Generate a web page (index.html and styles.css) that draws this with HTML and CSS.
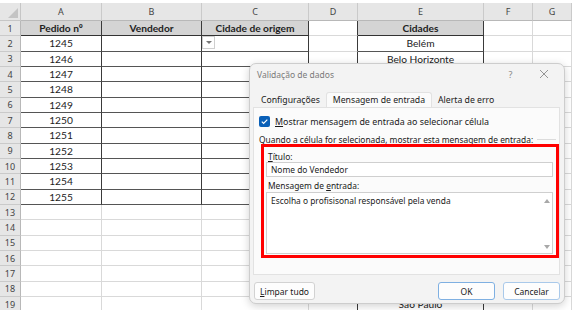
FILE: index.html
```html
<!DOCTYPE html>
<html lang="pt">
<head>
<meta charset="utf-8">
<title>Validação de dados</title>
<link rel="stylesheet" href="styles.css">
</head>
<body>
<div class="sheet">
  <div class="corner"><span class="tri"></span></div>
  <div class="ch">A</div><div class="ch">B</div><div class="ch">C</div><div class="ch">D</div><div class="ch">E</div><div class="ch">F</div><div class="ch">G</div>

  <div class="rh">1</div><div class="c t hd">Pedido nº</div><div class="c t hd">Vendedor</div><div class="c t hd">Cidade de origem</div><div class="c dl"></div><div class="c t hd">Cidades</div><div class="c"></div><div class="c"></div>
  <div class="rh">2</div><div class="c t">1245</div><div class="c t"></div><div class="c t"><span class="dd"><span class="ddtri"></span></span></div><div class="c dl"></div><div class="c t">Belém</div><div class="c"></div><div class="c"></div>
  <div class="rh">3</div><div class="c t">1246</div><div class="c t"></div><div class="c t"></div><div class="c dl"></div><div class="c t">Belo Horizonte</div><div class="c"></div><div class="c"></div>
  <div class="rh">4</div><div class="c t">1247</div><div class="c t"></div><div class="c t"></div><div class="c dl"></div><div class="c t"></div><div class="c"></div><div class="c"></div>
  <div class="rh">5</div><div class="c t">1248</div><div class="c t"></div><div class="c t"></div><div class="c dl"></div><div class="c t"></div><div class="c"></div><div class="c"></div>
  <div class="rh">6</div><div class="c t">1249</div><div class="c t"></div><div class="c t"></div><div class="c dl"></div><div class="c t"></div><div class="c"></div><div class="c"></div>
  <div class="rh">7</div><div class="c t">1250</div><div class="c t"></div><div class="c t"></div><div class="c dl"></div><div class="c t"></div><div class="c"></div><div class="c"></div>
  <div class="rh">8</div><div class="c t">1251</div><div class="c t"></div><div class="c t"></div><div class="c dl"></div><div class="c t"></div><div class="c"></div><div class="c"></div>
  <div class="rh">9</div><div class="c t">1252</div><div class="c t"></div><div class="c t"></div><div class="c dl"></div><div class="c t"></div><div class="c"></div><div class="c"></div>
  <div class="rh">10</div><div class="c t">1253</div><div class="c t"></div><div class="c t"></div><div class="c dl"></div><div class="c t"></div><div class="c"></div><div class="c"></div>
  <div class="rh">11</div><div class="c t">1254</div><div class="c t"></div><div class="c t"></div><div class="c dl"></div><div class="c t"></div><div class="c"></div><div class="c"></div>
  <div class="rh">12</div><div class="c t">1255</div><div class="c t"></div><div class="c t"></div><div class="c dl"></div><div class="c t"></div><div class="c"></div><div class="c"></div>
  <div class="rh">13</div><div class="c"></div><div class="c"></div><div class="c"></div><div class="c dl"></div><div class="c t"></div><div class="c"></div><div class="c"></div>
  <div class="rh">14</div><div class="c"></div><div class="c"></div><div class="c"></div><div class="c dl"></div><div class="c t"></div><div class="c"></div><div class="c"></div>
  <div class="rh">15</div><div class="c"></div><div class="c"></div><div class="c"></div><div class="c dl"></div><div class="c t"></div><div class="c"></div><div class="c"></div>
  <div class="rh">16</div><div class="c"></div><div class="c"></div><div class="c"></div><div class="c dl"></div><div class="c t"></div><div class="c"></div><div class="c"></div>
  <div class="rh">17</div><div class="c"></div><div class="c"></div><div class="c"></div><div class="c dl"></div><div class="c t"></div><div class="c"></div><div class="c"></div>
  <div class="rh">18</div><div class="c"></div><div class="c"></div><div class="c"></div><div class="c dl"></div><div class="c t"></div><div class="c"></div><div class="c"></div>
  <div class="rh">19</div><div class="c"></div><div class="c"></div><div class="c"></div><div class="c dl"></div><div class="c t">São Paulo</div><div class="c"></div><div class="c"></div>
</div>

<div class="dialog">
  <div class="titlebar">
    <span class="dtitle">Validação de dados</span>
    <span class="help">?</span>
    <span class="close"><svg width="10" height="10" viewBox="0 0 10 10"><path d="M1 1 L9 9 M9 1 L1 9" stroke="#8a8a8a" stroke-width="0.9" fill="none"/></svg></span>
  </div>
  <div class="tabs">
    <span class="tab">Configurações</span>
    <span class="tab active">Mensagem de entrada</span>
    <span class="tab">Alerta de erro</span>
  </div>
  <div class="pane">
    <div class="check">
      <span class="box"><svg width="11" height="11" viewBox="0 0 11 11"><path d="M2.8 5.6 L4.6 7.4 L8.3 3.6" stroke="#fff" stroke-width="1.2" fill="none"/></svg></span>
      <span class="checklbl"><u>M</u>ostrar mensagem de entrada ao selecionar célula</span>
    </div>
    <div class="group"><span>Quando a célula for selecionada, mostrar esta mensagem de entrada:</span><span class="gline"></span></div>
    <div class="mark">
      <div class="lbl"><span><u>T</u>ítulo:</span></div>
      <div class="input">Nome do Vendedor</div>
      <div class="lbl lbl2"><span>Mensagem de <u>e</u>ntrada:</span></div>
      <div class="textarea">
        <span class="tatext">Escolha o profisisonal responsável pela venda</span>
        <span class="scroll"><span class="up"></span><span class="down"></span></span>
      </div>
    </div>
  </div>
  <div class="buttons">
    <span class="btn clear"><span><u>L</u>impar tudo</span></span>
    <span class="spacer"></span>
    <span class="btn ok">OK</span>
    <span class="btn cancel">Cancelar</span>
  </div>
</div>
</body>
</html>
```

FILE: styles.css
```css
* { box-sizing: border-box; }
html, body { margin: 0; padding: 0; background: #fff; }
body { width: 572px; height: 310px; overflow: hidden; position: relative; }

.sheet {
  display: grid;
  grid-template-columns: 21px 81px 100px 107px 49px 126px 49px 39px;
  grid-template-rows: 18px repeat(19, 15.33px);
  padding-top: 3px;
  font-family: "Lato", "Liberation Sans", sans-serif;
  font-size: 10.2px;
  color: #222;
}
.corner {
  background: #e6e6e6;
  border-right: 1px solid #c6c6c6;
  border-bottom: 1px solid #c6c6c6;
  position: relative;
}
.tri {
  position: absolute; right: 2px; bottom: 2px;
  width: 0; height: 0;
  border-left: 10px solid transparent;
  border-bottom: 10px solid #c4c4c4;
}
.ch {
  background: #e6e6e6;
  border-right: 1px solid #cacaca;
  border-bottom: 1px solid #b8b8b8;
  color: #444;
  display: flex; align-items: center; justify-content: center;
  font-family: "Noto Sans", sans-serif;
  font-size: 9px;
}
.rh {
  background: #e6e6e6;
  border-right: 1px solid #b8b8b8;
  border-bottom: 1px solid #cacaca;
  color: #444;
  display: flex; align-items: center; justify-content: center;
  font-family: "Noto Sans", sans-serif;
  font-size: 9px;
}
.c {
  border-right: 1px solid #d9d9d9;
  border-bottom: 1px solid #d9d9d9;
  display: flex; align-items: center; justify-content: center;
  position: relative;
  white-space: nowrap;
  overflow: hidden;
}
.c.t { border-right: 1px solid #3a3a3a; border-bottom: 1px solid #555; }
.c.dl { border-right: 1px solid #3a3a3a; }
.c.hd { background: #d4d4d4; font-weight: 700; border-bottom: 1px solid #333; }
.dd {
  position: absolute; left: 0; top: 0;
  width: 13px; height: 13px;
  border: 1px solid #cfcfcf;
  background: #fff;
  display: flex; align-items: center; justify-content: center;
}
.ddtri {
  width: 0; height: 0;
  border-left: 3px solid transparent;
  border-right: 3px solid transparent;
  border-top: 3px solid #777;
}

/* dialog */
.dialog {
  position: absolute;
  left: 249px; top: 63px;
  width: 316px; height: 241px;
  background: #f3f3f3;
  border: 1px solid #cdcdcd;
  border-radius: 7px;
  box-shadow: 0 2px 8px rgba(0,0,0,0.18);
  font-family: "Noto Sans", sans-serif;
  font-size: 8.4px;
  color: #1a1a1a;
  display: flex; flex-direction: column;
  padding: 0 4px 3px 3px;
}
.titlebar {
  height: 20px;
  display: flex; align-items: center;
  padding-left: 4px;
  color: #7a7a7a;
  font-size: 8.5px;
}
.dtitle { flex: 1; }
.help { width: 33px; text-align: center; color: #888; font-size: 9px; }
.close { width: 33px; display: flex; justify-content: center; align-items: center; }
.tabs {
  display: flex;
  margin-top: 8px;
  padding-left: 2px;
  height: 15px;
  align-items: stretch;
  font-size: 8.7px;
}
.tab {
  padding: 0 6px;
  display: flex; align-items: center;
}
.tab.active {
  background: #fbfbfb;
  border: 1px solid #e2e2e2;
  border-bottom: none;
  border-radius: 3px 3px 0 0;
}
.pane {
  height: 168px;
  background: #fbfbfb;
  border: 1px solid #e2e2e2;
  display: flex; flex-direction: column;
  padding: 7px 0 0 5px;
}
.check { display: flex; align-items: center; gap: 5px; height: 12px; }
.checklbl { font-size: 8.9px; }
.box {
  width: 11px; height: 11px;
  background: #0a60b8;
  border-radius: 2px;
  display: flex;
}
.group {
  display: flex; align-items: center;
  margin-top: 8px;
  height: 9px;
  gap: 4px;
  padding-right: 3px;
}
.gline { flex: 1; height: 1px; background: #dcdcdc; }
.mark {
  margin: 0 0 0 2px;
  width: 298px;
  height: 114px;
  border: 3px solid #ff0000;
  padding: 3px 3px 0 2px;
  display: flex; flex-direction: column;
}
.lbl { height: 12px; display: flex; align-items: center; padding-left: 2px; }
.lbl2 { margin-top: 2px; }
.input {
  height: 15px;
  background: #fff;
  border: 1px solid #cfcfcf;
  display: flex; align-items: center;
  padding-left: 4px;
}
.textarea {
  margin-top: 1px;
  height: 62px;
  background: #fff;
  border: 1px solid #cfcfcf;
  display: flex;
  padding-left: 4px;
}
.tatext { flex: 1; padding-top: 2px; }
.scroll {
  width: 11px;
  display: flex; flex-direction: column; justify-content: space-between; align-items: center;
  padding: 6px 0 4px;
}
.up { width: 0; height: 0; border-left: 3.5px solid transparent; border-right: 3.5px solid transparent; border-bottom: 4px solid #a8a8a8; }
.down { width: 0; height: 0; border-left: 3.5px solid transparent; border-right: 3.5px solid transparent; border-top: 4px solid #a8a8a8; }
.buttons {
  display: flex;
  margin-top: 7px;
  height: 18px;
  gap: 8px;
  padding-left: 1px;
}
.spacer { flex: 1; }
.btn {
  height: 18px;
  border: 1px solid #d2d2d2;
  border-radius: 3px;
  background: #fdfdfd;
  display: flex; align-items: center; justify-content: center;
  font-size: 8.5px;
  width: 57px;
}
.btn.clear { width: 61px; }
.btn.ok { border-color: #7fb0e2; }
.btn.cancel { border-color: #a9c9ea; }
```
